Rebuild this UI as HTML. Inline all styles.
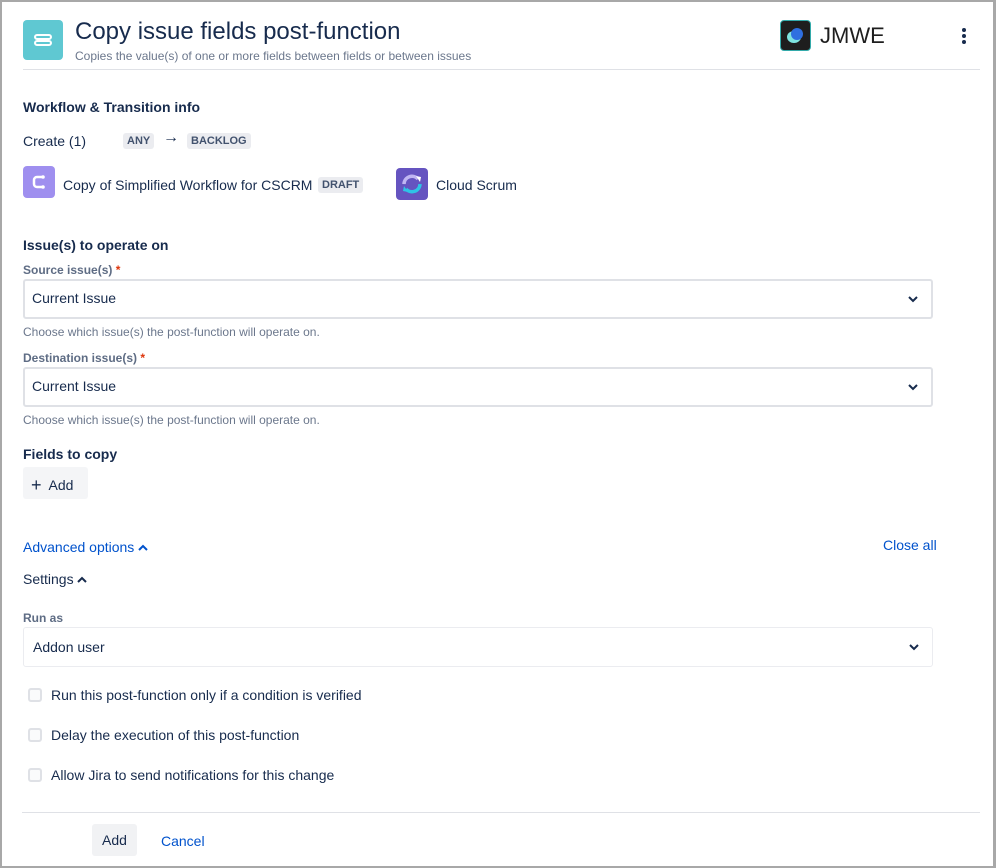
<!DOCTYPE html>
<html><head><meta charset="utf-8"><style>
*{box-sizing:border-box;margin:0;padding:0}
body{width:996px;height:868px;background:#fff;font-family:"Liberation Sans",sans-serif;color:#172b4d;position:relative;overflow:hidden}
.frame{position:absolute;left:0;top:0;width:996px;height:868px;border:2px solid #a8a8a8;border-right-width:3px}
.a{position:absolute;white-space:nowrap}
.lbl{font-size:12px;color:#5e6c84;font-weight:bold}
.h{font-size:14px;font-weight:bold}
.sel{position:absolute;left:23px;width:910px;height:40px;border:2px solid #dfe1e6;border-radius:3px;background:#fff;font-size:14px;padding:9px 7px}
.chev{position:absolute;right:12px;top:13px}
.help{font-size:12px;color:#6b778c}
.lozenge{position:absolute;background:#ebecf0;color:#42526e;font-size:11px;font-weight:bold;padding:2px 4px;border-radius:3px}
.cb{position:absolute;left:28px;width:14px;height:14px;border:2px solid #dfe1e6;border-radius:3px;background:#fafbfc}
.ct{position:absolute;left:51px;font-size:14px}
</style></head><body>
<div class="frame"></div>
<div class="a" style="left:23px;top:20px;width:40px;height:40px;background:#5fc8d2;border-radius:4px">
<svg width="40" height="40"><rect x="12" y="15" width="16" height="4" rx="2" fill="none" stroke="#fff" stroke-width="2"/><rect x="12" y="21" width="16" height="4" rx="2" fill="none" stroke="#fff" stroke-width="2"/></svg></div>
<div class="a" style="left:75px;top:18px;font-size:24px;color:#172b4d">Copy issue fields post-function</div>
<div class="a" style="left:75px;top:49px;font-size:12px;color:#6b778c">Copies the value(s) of one or more fields between fields or between issues</div>
<div class="a" style="left:780px;top:20px;width:31px;height:31px;background:#1e1e1e;border-radius:4px;border:1px solid #3aa">
<svg width="29" height="29"><ellipse cx="13" cy="16" rx="7" ry="6" fill="#7ee3e0"/><circle cx="16" cy="13" r="6" fill="#2f6fe0"/></svg></div>
<div class="a" style="left:820px;top:23px;font-size:22px;color:#1e1e1e">JMWE</div>
<svg class="a" style="left:960px;top:27px" width="8" height="18"><circle cx="4" cy="3" r="2" fill="#172b4d"/><circle cx="4" cy="9" r="2" fill="#172b4d"/><circle cx="4" cy="15" r="2" fill="#172b4d"/></svg>
<div class="a" style="left:23px;top:69px;width:957px;height:1px;background:#dfe1e6"></div>
<div class="a h" style="left:23px;top:99px">Workflow &amp; Transition info</div>
<div class="a" style="left:23px;top:133px;font-size:14px">Create (1)</div>
<div class="lozenge" style="left:123px;top:133px">ANY</div>
<div class="a" style="left:163px;top:129px;font-size:16px">→</div>
<div class="lozenge" style="left:187px;top:133px">BACKLOG</div>
<div class="a" style="left:23px;top:166px;width:32px;height:32px;background:#9f8fef;border-radius:4px">
<svg width="32" height="32"><path d="M20 11h-6a3 3 0 0 0-3 3v4a3 3 0 0 0 3 3h6" fill="none" stroke="#fff" stroke-width="2.5"/><circle cx="20" cy="11" r="1.8" fill="#fff"/><circle cx="20" cy="21" r="1.8" fill="#fff"/></svg></div>
<div class="a" style="left:63px;top:177px;font-size:14px">Copy of Simplified Workflow for CSCRM</div>
<div class="lozenge" style="left:318px;top:177px">DRAFT</div>
<div class="a" style="left:396px;top:168px;width:32px;height:32px;background:#6554c0;border-radius:4px">
<svg width="32" height="32"><path d="M8 16a8 8 0 0 1 14-5" fill="none" stroke="#c0b6f2" stroke-width="3.5"/><path d="M24 16a8 8 0 0 1-14 5" fill="none" stroke="#2ec4e6" stroke-width="3.5"/><path d="M20 8l5 1-1 5z" fill="#fff"/><path d="M12 24l-5-1 1-5z" fill="#2ec4e6"/></svg></div>
<div class="a" style="left:436px;top:177px;font-size:14px">Cloud Scrum</div>
<div class="a h" style="left:23px;top:237px">Issue(s) to operate on</div>
<div class="a lbl" style="left:23px;top:263px">Source issue(s) <span style="color:#de350b">*</span></div>
<div class="sel" style="top:279px">Current Issue<svg class="chev" width="12" height="10"><path d="M2 3l4 4 4-4" fill="none" stroke="#172b4d" stroke-width="2"/></svg></div>
<div class="a help" style="left:23px;top:325px">Choose which issue(s) the post-function will operate on.</div>
<div class="a lbl" style="left:23px;top:351px">Destination issue(s) <span style="color:#de350b">*</span></div>
<div class="sel" style="top:367px">Current Issue<svg class="chev" width="12" height="10"><path d="M2 3l4 4 4-4" fill="none" stroke="#172b4d" stroke-width="2"/></svg></div>
<div class="a help" style="left:23px;top:413px">Choose which issue(s) the post-function will operate on.</div>
<div class="a h" style="left:23px;top:446px">Fields to copy</div>
<div class="a" style="left:23px;top:467px;width:65px;height:32px;background:#f4f5f7;border-radius:3px;font-size:14px;padding:7px 0 0 8px;color:#172b4d"><span style="font-size:18px;position:relative;top:1px">+</span>&nbsp; Add</div>
<div class="a" style="left:23px;top:539px;font-size:14px;color:#0052cc">Advanced options <svg width="10" height="8"><path d="M1 6l4-4 4 4" fill="none" stroke="#0052cc" stroke-width="2"/></svg></div>
<div class="a" style="left:883px;top:537px;font-size:14px;color:#0052cc">Close all</div>
<div class="a" style="left:23px;top:571px;font-size:14px">Settings <svg width="10" height="8"><path d="M1 6l4-4 4 4" fill="none" stroke="#172b4d" stroke-width="2"/></svg></div>
<div class="a lbl" style="left:23px;top:611px">Run as</div>
<div class="sel" style="top:627px;height:40px;border-width:1px;border-color:#ebecf0;padding:11px 9px">Addon user<svg class="chev" width="12" height="10" style="top:14px"><path d="M2 3l4 4 4-4" fill="none" stroke="#172b4d" stroke-width="2"/></svg></div>
<div class="cb" style="top:688px"></div><div class="ct" style="top:687px">Run this post-function only if a condition is verified</div>
<div class="cb" style="top:728px"></div><div class="ct" style="top:727px">Delay the execution of this post-function</div>
<div class="cb" style="top:768px"></div><div class="ct" style="top:767px">Allow Jira to send notifications for this change</div>
<div class="a" style="left:22px;top:812px;width:958px;height:1px;background:#dfe1e6"></div>
<div class="a" style="left:92px;top:824px;width:45px;height:32px;background:#f1f2f4;border-radius:3px;font-size:14px;padding:8px 0 0 10px;color:#172b4d">Add</div>
<div class="a" style="left:161px;top:833px;font-size:14px;color:#0052cc">Cancel</div>
</body></html>
